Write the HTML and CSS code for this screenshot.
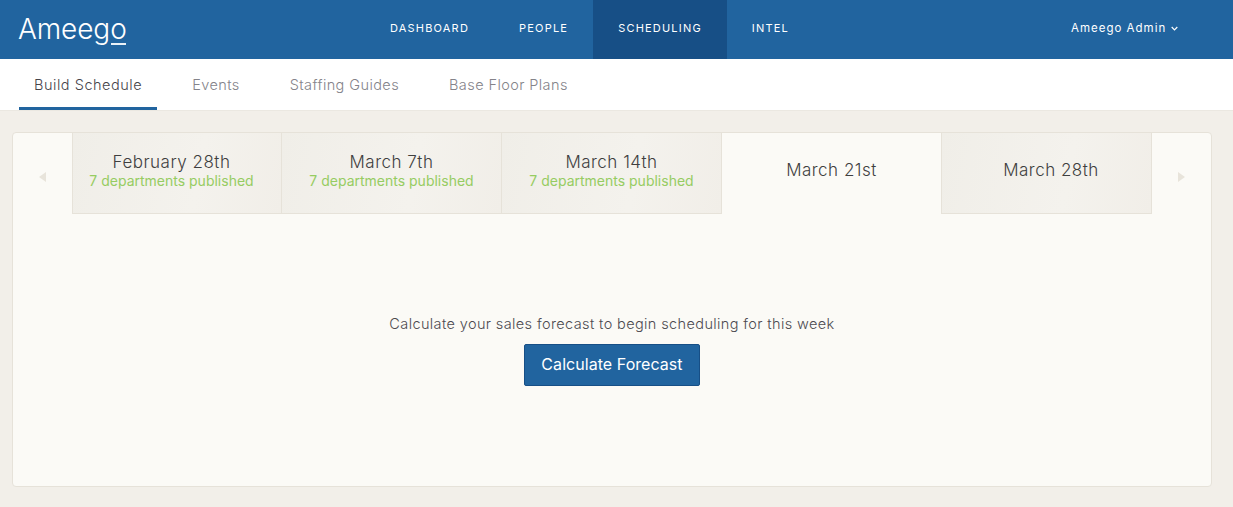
FILE: index.html
```html
<!DOCTYPE html>
<html lang="en">
<head>
<meta charset="utf-8">
<title>Ameego</title>
<link rel="stylesheet" href="styles.css">
</head>
<body>
<header class="topbar">
  <a class="logo">Ameeg<span class="logo-o">o</span></a>
  <nav class="mainnav">
    <a class="mainlink">DASHBOARD</a>
    <a class="mainlink">PEOPLE</a>
    <a class="mainlink active">SCHEDULING</a>
    <a class="mainlink">INTEL</a>
  </nav>
  <a class="user">Ameego Admin
    <svg class="chev" width="7" height="5" viewBox="0 0 7 5"><path d="M.7 1l2.8 2.8L6.3 1" fill="none" stroke="#fff" stroke-width="1.2"/></svg>
  </a>
</header>
<nav class="subnav">
  <a class="sublink current">Build Schedule</a>
  <a class="sublink">Events</a>
  <a class="sublink">Staffing Guides</a>
  <a class="sublink">Base Floor Plans</a>
</nav>
<main class="page">
  <section class="card">
    <div class="weeks">
      <div class="arrow"><svg width="7" height="10" viewBox="0 0 7 10"><path d="M7 0v10L0 5z" fill="#e8e4db"/></svg></div>
      <div class="week first"><span class="date">February 28th</span><span class="status">7 departments published</span></div>
      <div class="week"><span class="date">March 7th</span><span class="status">7 departments published</span></div>
      <div class="week"><span class="date">March 14th</span><span class="status">7 departments published</span></div>
      <div class="week selected"><span class="date">March 21st</span></div>
      <div class="week last"><span class="date">March 28th</span></div>
      <div class="arrow"><svg width="7" height="10" viewBox="0 0 7 10"><path d="M0 0v10l7-5z" fill="#e8e4db"/></svg></div>
    </div>
    <div class="empty">
      <p class="prompt">Calculate your sales forecast to begin scheduling for this week</p>
      <button class="cta">Calculate Forecast</button>
    </div>
  </section>
</main>
</body>
</html>
```
FILE: styles.css
```css
* { box-sizing: border-box; }
html, body { margin: 0; height: 100%; }
body { background: #f2efe9; font-family: Inter, "Open Sans", sans-serif; color: #555; overflow: hidden; }
.topbar { height: 59px; background: #21649f; display: flex; align-items: stretch; position: relative; color: #fff; }
.logo { font-family: Inter, sans-serif; font-size: 28px; font-weight: 300; line-height: 58px; margin-left: 18px; width: 347px; letter-spacing: -.1px; }
.logo-o { position: relative; }
.logo-o::after { content: ""; position: absolute; left: 1px; right: 1px; bottom: 1px; height: 2px; background: #eaf1f7; }
.mainnav { display: flex; }
.mainlink { font-size: 11px; letter-spacing: 1.2px; line-height: 57px; padding: 0 25px; font-weight: 400; }
.mainlink.active { background: #174f86; }
.user { position: absolute; left: 1071px; top: 0; font-size: 11.5px; letter-spacing: 1px; line-height: 57px; display: flex; align-items: center; gap: 5px; }
.subnav { height: 52px; background: #fff; border-bottom: 1px solid #ebe8e1; display: flex; padding-left: 19px; gap: 20px; }
.sublink { font-size: 14.5px; font-weight: 300; line-height: 51px; padding: 0 15px; color: #84838a; height: 51px; letter-spacing: .41px; }
.sublink.current { color: #46444a; border-bottom: 3px solid #21649f; letter-spacing: .53px; }
.page { padding: 21px 21px 20px 12px; }
.card { height: 355px; background: #fbfaf6; border: 1px solid #e6e2d9; border-radius: 4px; }
.weeks { display: flex; height: 81px; }
.arrow { width: 59px; flex: none; display: flex; align-items: center; justify-content: center; padding-top: 6px; }
.week { width: 220px; flex: none; background: linear-gradient(100deg, #f0eee8, #f4f2ed 60%, #f1eee8); border-bottom: 1px solid #e6e2d9; border-right: 1px solid #e6e2d9; display: flex; flex-direction: column; align-items: center; justify-content: center; padding-bottom: 7px; }
.week.first { width: 210px; border-left: 1px solid #e6e2d9; padding-right: 11px; }
.week.last { width: 210px; padding-left: 9px; padding-bottom: 6px; }
.week.selected { background: #fbfaf6; border-bottom: 0; }
.date { font-size: 17px; font-weight: 300; letter-spacing: .5px; color: #3f3f3f; line-height: 22px; }
.status { font-size: 14px; color: #96cc62; line-height: 16px; }
.empty { text-align: center; padding-top: 100px; }
.prompt { margin: 0 0 10px; font-size: 14.5px; font-weight: 300; line-height: 20px; color: #4c4a50; letter-spacing: .38px; }
.cta { width: 176px; height: 42px; background: #21649f; border: 1px solid #174f86; border-radius: 2px; color: #fff; font: 400 16px Inter, sans-serif; letter-spacing: .05px; padding: 0 0 2px; }
```
